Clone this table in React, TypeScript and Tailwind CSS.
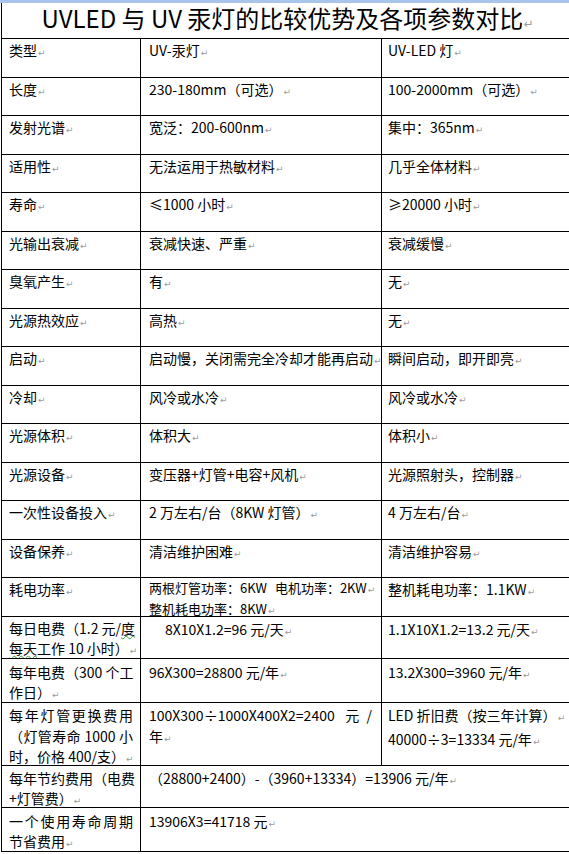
import React from "react";

const Mark = () => (
  <span className="ml-[1px] font-['DejaVu_Sans',sans-serif] text-[9px] text-[#9b9b9b]">↵</span>
);

const simpleRows: [string, string, string][] = [
  ["类型", "UV-汞灯", "UV-LED 灯"],
  ["长度", "230-180mm（可选）", "100-2000mm（可选）"],
  ["发射光谱", "宽泛：200-600nm", "集中：365nm"],
  ["适用性", "无法运用于热敏材料", "几乎全体材料"],
  ["寿命", "≤1000 小时", "≥20000 小时"],
  ["光输出衰减", "衰减快速、严重", "衰减缓慢"],
  ["臭氧产生", "有", "无"],
  ["光源热效应", "高热", "无"],
  ["启动", "启动慢，关闭需完全冷却才能再启动", "瞬间启动，即开即亮"],
  ["冷却", "风冷或水冷", "风冷或水冷"],
  ["光源体积", "体积大", "体积小"],
  ["光源设备", "变压器+灯管+电容+风机", "光源照射头，控制器"],
  ["一次性设备投入", "2 万左右/台（8KW 灯管）", "4 万左右/台"],
  ["设备保养", "清洁维护困难", "清洁维护容易"],
];

const c1 = "border-r border-black pl-[7px] pr-[7px] overflow-hidden";
const c2 = "border-r border-black pl-[8px] pr-[9px] overflow-hidden";
const c3 = "pl-[6px] pr-[4px] overflow-hidden";
const jl = "text-justify [text-align-last:justify]";

export default function App() {
  return (
    <div className="w-[569px] h-[854px] overflow-hidden bg-white text-black font-['Noto_Sans_CJK_SC',sans-serif] text-[14px] leading-[20px]">
      <div className="h-[3px] bg-[#a9c5ea]" />
      <div className="ml-[1px] w-[572px] border-l border-black">
        <div className="h-[36px] border-b border-black flex items-center justify-center text-[24px] leading-[30px]">
          <span className="whitespace-nowrap">
            UVLED 与 UV 汞灯的比较优势及各项参数对比
            <span className="font-['DejaVu_Sans',sans-serif] text-[12px] text-[#9b9b9b]">↵</span>
          </span>
        </div>

        {simpleRows.map(([a, b, c]) => (
          <div key={a} className="grid grid-cols-[139px_241px_1fr] h-[38.5px] border-b border-black">
            <div className={`${c1} pt-[1px] whitespace-nowrap`}>
              {a}
              <Mark />
            </div>
            <div className={`${c2} pt-[1px] whitespace-nowrap`}>
              {b}
              <Mark />
            </div>
            <div className={`${c3} pt-[1px] whitespace-nowrap`}>
              {c}
              <Mark />
            </div>
          </div>
        ))}

        <div className="grid grid-cols-[139px_241px_1fr] h-[39px] border-b border-black">
          <div className={`${c1} pt-[1px]`}>
            耗电功率
            <Mark />
          </div>
          <div className="border-r border-black pl-[8px] pr-0 overflow-hidden pt-[1px] whitespace-nowrap text-[13px] leading-[18.5px]">
            <div>
              两根灯管功率：6KW<span className="inline-block w-[8px]" />电机功率：2KW
              <Mark />
            </div>
            <div>
              整机耗电功率：8KW
              <Mark />
            </div>
          </div>
          <div className={`${c3} pt-[1px] whitespace-nowrap`}>
            整机耗电功率：1.1KW
            <Mark />
          </div>
        </div>

        <div className="grid grid-cols-[139px_241px_1fr] h-[42px] border-b border-black">
          <div className={`${c1} pt-[1px] whitespace-nowrap`}>
            <div className={jl}>
              每日电费（1.2 元/<span className="underline decoration-wavy decoration-[#3aa03a] decoration-1">度</span>
            </div>
            <div>
              <span className="underline decoration-wavy decoration-[#3aa03a] decoration-1">每天</span>工作 10 小时）
              <Mark />
            </div>
          </div>
          <div className={`${c2} pt-[2px] whitespace-nowrap`}>
            <span className="ml-[16px]">8X10X1.2=96 元/天</span>
            <Mark />
          </div>
          <div className={`${c3} pt-[2px] whitespace-nowrap`}>
            1.1X10X1.2=13.2 元/天
            <Mark />
          </div>
        </div>

        <div className="grid grid-cols-[139px_241px_1fr] h-[44px] border-b border-black">
          <div className={`${c1} pt-[3px] whitespace-nowrap`}>
            <div className={jl}>每年电费（300 个工</div>
            <div>
              作日）
              <Mark />
            </div>
          </div>
          <div className={`${c2} pt-[3px] whitespace-nowrap`}>
            96X300=28800 元/年
            <Mark />
          </div>
          <div className={`${c3} pt-[3px] whitespace-nowrap`}>
            13.2X300=3960 元/年
            <Mark />
          </div>
        </div>

        <div className="grid grid-cols-[139px_241px_1fr] h-[63px] border-b border-black">
          <div className={`${c1} pt-[2px] whitespace-nowrap leading-[20.5px]`}>
            <div className={jl}>每年灯管更换费用</div>
            <div className={jl}>（灯管寿命 1000 小</div>
            <div>
              时，价格 400/支）
              <Mark />
            </div>
          </div>
          <div className={`${c2} pt-[2px] whitespace-nowrap leading-[20.5px]`}>
            <div className={jl}>100X300÷1000X400X2=2400 元/</div>
            <div>
              年
              <Mark />
            </div>
          </div>
          <div className={`${c3} pt-[2px] whitespace-nowrap leading-[20.5px]`}>
            <div>
              LED 折旧费（按三年计算）
              <Mark />
            </div>
            <div>
              40000÷3=13334 元/年
              <Mark />
            </div>
          </div>
        </div>

        <div className="grid grid-cols-[139px_1fr] h-[42px] border-b border-black">
          <div className={`${c1} pt-[2px] whitespace-nowrap`}>
            <div>每年节约费用（电费</div>
            <div>
              +灯管费）
              <Mark />
            </div>
          </div>
          <div className="pl-[8px] pt-[2px] whitespace-nowrap">
            （28800+2400）-（3960+13334）=13906 元/年
            <Mark />
          </div>
        </div>

        <div className="grid grid-cols-[139px_1fr] h-[44px] border-b border-black">
          <div className={`${c1} pt-[3px] whitespace-nowrap`}>
            <div className={jl}>一个使用寿命周期</div>
            <div>
              节省费用
              <Mark />
            </div>
          </div>
          <div className="pl-[8px] pt-[3px] whitespace-nowrap">
            13906X3=41718 元
            <Mark />
          </div>
        </div>
      </div>
    </div>
  );
}
